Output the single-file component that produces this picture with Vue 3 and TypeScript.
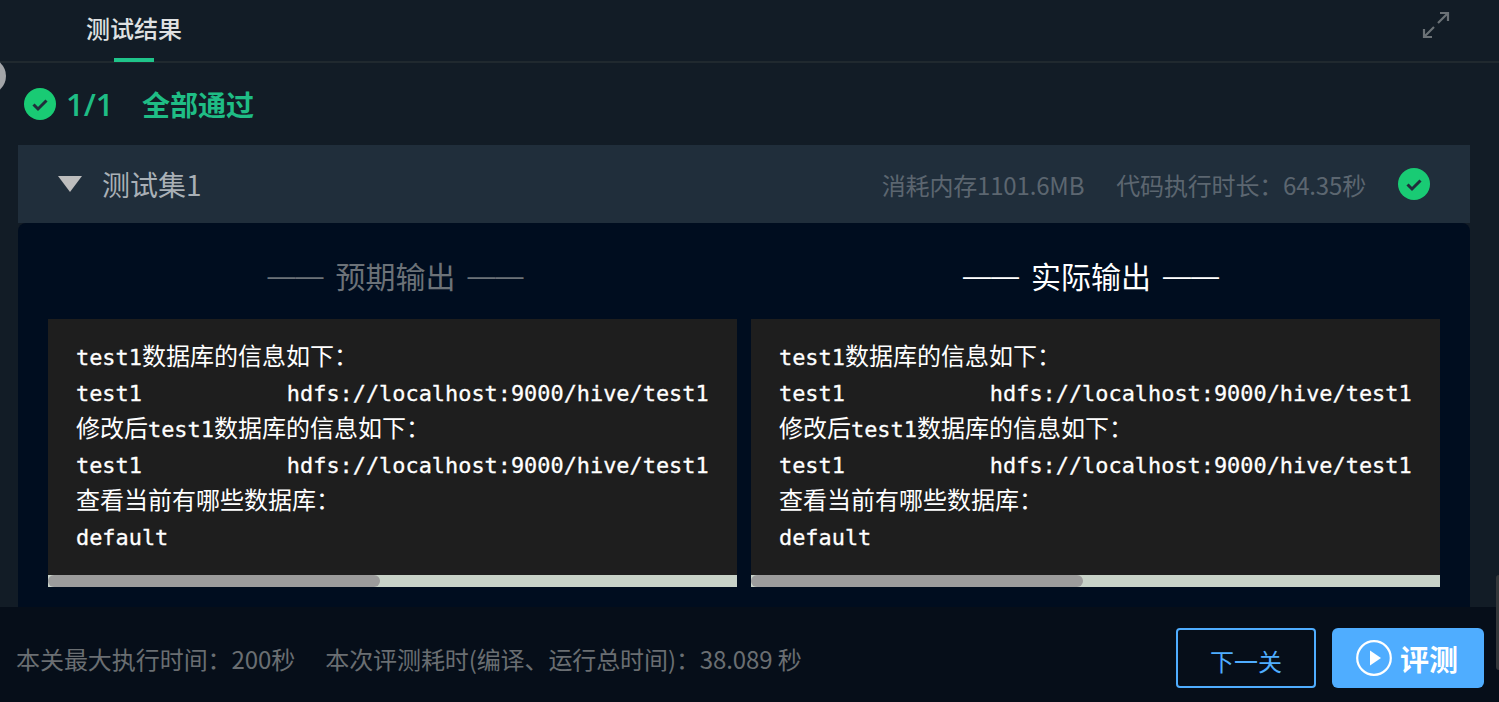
<script setup lang="ts">
interface Seg { text: string; cjk: boolean }
const gap = ' '.repeat(11)
const rawLines: string[] = [
  'test1数据库的信息如下：',
  `test1${gap}hdfs://localhost:9000/hive/test1`,
  '修改后test1数据库的信息如下：',
  `test1${gap}hdfs://localhost:9000/hive/test1`,
  '查看当前有哪些数据库：',
  'default',
]
const lines: Seg[][] = rawLines.map((l) =>
  (l.match(/[\u3000-\uffff]+|[^\u3000-\uffff]+/g) ?? []).map((text) => ({
    text,
    cjk: /[\u3000-\uffff]/.test(text),
  })),
)
const columns = [
  { title: '预期输出', active: false },
  { title: '实际输出', active: true },
]
</script>

<template>
  <div class="page">
    <header class="tabs">
      <div class="tab">测试结果</div>
      <svg class="expand" width="28" height="28" viewBox="0 0 28 28" fill="none" stroke="#6b7176" stroke-width="2.2">
        <path d="M16 12 L26 2 M18 2 H26 V10 M12 16 L2 26 M2 18 V26 H10" />
      </svg>
    </header>
    <span class="handle"></span>
    <span class="edge"></span>

    <div class="summary">
      <svg width="32" height="32" viewBox="0 0 32 32">
        <circle cx="16" cy="16" r="16" fill="#19cb74" />
        <path d="M9.5 16.5 L14 21 L22.5 12.5" fill="none" stroke="#202e3b" stroke-width="3" />
      </svg>
      <span class="count">1/1</span>
      <span class="all">全部通过</span>
    </div>

    <section class="set">
      <div class="set-head">
        <span class="tri"></span>
        <span class="set-name">测试集1</span>
        <span class="meta first">消耗内存1101.6MB</span>
        <span class="meta">代码执行时长：64.35秒</span>
        <svg class="ok" width="32" height="32" viewBox="0 0 32 32">
          <circle cx="16" cy="16" r="16" fill="#19cb74" />
          <path d="M9.5 16.5 L14 21 L22.5 12.5" fill="none" stroke="#202e3b" stroke-width="3" />
        </svg>
      </div>
      <div class="set-body">
        <div v-for="c in columns" :key="c.title" class="col">
          <div class="col-title" :class="{ active: c.active }">
            <span class="dash">——</span>
            <span class="label">{{ c.title }}</span>
            <span class="dash">——</span>
          </div>
          <div class="code-wrap">
            <div class="code">
              <div v-for="(l, i) in lines" :key="i" class="line"><span v-for="(s, j) in l" :key="j" :class="s.cjk ? 'zh' : 'en'">{{ s.text }}</span></div>
            </div>
            <div class="track"><div class="thumb"></div></div>
          </div>
        </div>
      </div>
    </section>

    <footer class="foot">
      <span class="info">本关最大执行时间：200秒</span>
      <span class="info second">本次评测耗时(编译、运行总时间)：38.089 秒</span>
      <button class="btn-next">下一关</button>
      <button class="btn-run">
        <svg width="36" height="36" viewBox="0 0 36 36">
          <circle cx="18" cy="18" r="16.8" fill="none" stroke="#fff" stroke-width="2.2" />
          <path d="M14 10.5 L25 18 L14 25.5 Z" fill="#fff" />
        </svg>
        <span>评测</span>
      </button>
    </footer>
  </div>
</template>

<style>
html, body { margin: 0; background: #121c26; overflow: hidden; }
</style>

<style scoped>
.page {
  position: relative;
  width: 1499px;
  height: 702px;
  overflow: hidden;
  background: #121c26;
  display: flex;
  flex-direction: column;
  font-family: "Noto Sans CJK SC", "Open Sans", sans-serif;
}
.tabs {
  height: 61px;
  flex: none;
  border-bottom: 2px solid #20292f;
  display: flex;
  justify-content: space-between;
}
.tab {
  position: relative;
  margin-left: 86px;
  font-size: 24px;
  font-weight: 500;
  line-height: 56px;
  height: 58px;
  padding-bottom: 3px;
  color: #dfe1e2;
}
.tab::after {
  content: "";
  position: absolute;
  left: 28px;
  width: 40px;
  bottom: -1px;
  height: 4px;
  background: #1fc48a;
}
.expand { margin: 11px 49px 0 0; }
.handle {
  position: absolute;
  left: -30px;
  top: 58px;
  width: 36px;
  height: 36px;
  border-radius: 50%;
  background: #a3a5a8;
}
.edge {
  position: absolute;
  z-index: 2;
  right: 0;
  top: 575px;
  width: 3px;
  height: 95px;
  border-radius: 3px 0 0 3px;
  background: #33373a;
}
.summary {
  height: 82px;
  flex: none;
  display: flex;
  align-items: center;
  padding-left: 24px;
  box-sizing: border-box;
  color: #1fbd85;
  font-size: 28px;
  font-weight: 700;
}
.count { margin-left: 10px; width: 46px; font-family: "Open Sans", sans-serif; font-weight: 600; font-size: 31px; white-space: nowrap; }
.all { margin-left: 30px; }
.set { margin: 0 29px 0 18px; flex: none; }
.set-head {
  height: 78px;
  background: #202e3b;
  display: flex;
  align-items: center;
  padding: 0 40px;
}
.tri {
  width: 0;
  height: 0;
  border-left: 12px solid transparent;
  border-right: 12px solid transparent;
  border-top: 16px solid #bdbdbd;
}
.set-name { margin-left: 20px; font-size: 28px; color: #a9b0b6; flex: 1; }
.meta { font-size: 24px; color: #5c6670; margin-left: 32px; letter-spacing: -0.17px; }
.ok { margin-left: 32px; }
.set-body {
  background: #000d1f;
  border-radius: 8px 8px 0 0;
  height: 384px;
  padding: 0 30px;
  display: grid;
  grid-template-columns: 689px 689px;
  column-gap: 14px;
}
.col-title {
  height: 96px;
  display: flex;
  justify-content: center;
  align-items: center;
  gap: 12px;
  padding: 10px 0 0 6px;
  box-sizing: border-box;
  color: #6c7278;
}
.col-title.active { color: #fff; padding-left: 0; padding-right: 9px; }
.dash { font: 28px "Liberation Sans", sans-serif; }
.label { font-size: 30px; line-height: 40px; margin-top: -3px; }
.code-wrap { background: #1e1e1e; height: 268px; display: flex; flex-direction: column; }
.code {
  flex: 1;
  padding: 21px 28px 0;
  color: #fff;
  overflow: hidden;
}
.line {
  height: 36px;
  line-height: 36px;
  white-space: pre;
  font-family: "DejaVu Sans Mono", monospace;
  font-size: 21.9px;
}
.en { -webkit-text-stroke: 0.3px #fff; }
.zh { font-size: 24px; line-height: 0; font-family: "Noto Sans CJK SC", sans-serif; }
.track { height: 12px; background: #c8d2c8; flex: none; }
.thumb { width: 332px; height: 12px; background: #9c9c9c; border-radius: 6px; }
.foot {
  position: absolute;
  left: 0;
  right: 0;
  bottom: 0;
  height: 95px;
  background: #060e19;
  display: flex;
  align-items: center;
  padding: 0 15px 0 16px;
}
.info { font-size: 24px; color: #6a6e72; padding-top: 8px; letter-spacing: -0.05px; }
.second { margin-left: 30px; flex: 1; letter-spacing: -0.1px; }
.btn-next {
  width: 140px;
  height: 60px;
  margin-top: 6px;
  box-sizing: border-box;
  background: transparent;
  border: 2px solid #4fadff;
  border-radius: 4px;
  color: #4fadff;
  font: 24px "Noto Sans CJK SC", sans-serif;
  padding: 6px 0 0;
}
.btn-run {
  width: 152px;
  height: 60px;
  margin: 6px 0 0 16px;
  border: 0;
  border-radius: 6px;
  background: #4fadff;
  color: #fff;
  font: 700 29px "Noto Sans CJK SC", sans-serif;
  display: flex;
  align-items: center;
  justify-content: center;
  gap: 8px;
  padding: 0 2px 0 0;
}
</style>
